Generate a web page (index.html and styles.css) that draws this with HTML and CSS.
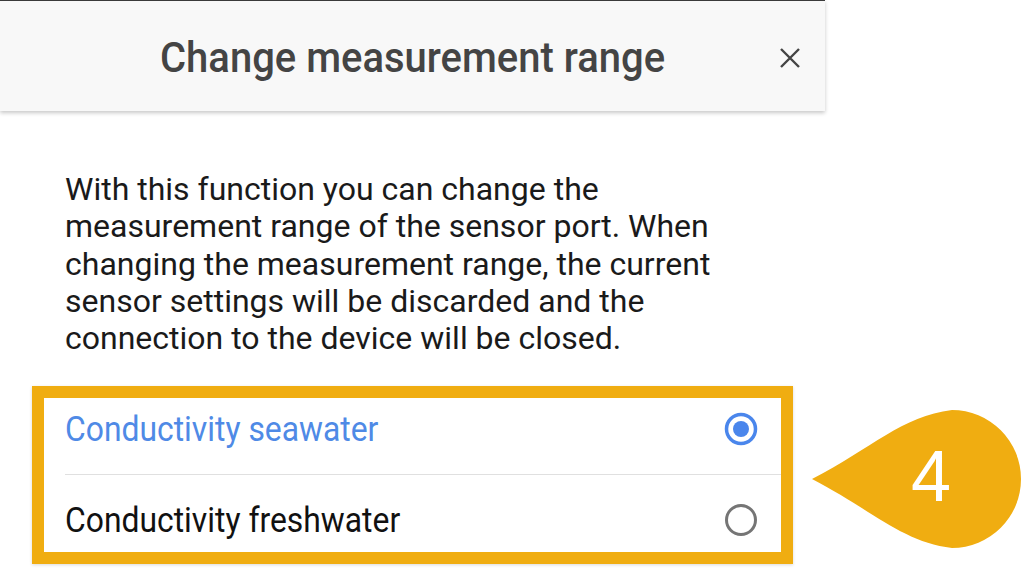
FILE: index.html
```html
<!DOCTYPE html>
<html>
<head>
<meta charset="utf-8">
<link rel="stylesheet" href="styles.css">
</head>
<body>
<div class="page">
  <div class="panel">
    <header class="header">
      <h1 class="title">Change measurement range</h1>
      <svg class="close" width="22" height="22" viewBox="0 0 22 22"><path d="M2 2 L20 20 M20 2 L2 20" stroke="#444" stroke-width="2.4" fill="none"/></svg>
    </header>
    <div class="content">
      <p class="desc">With this function you can change the measurement range of the sensor port. When changing the measurement range, the current sensor settings will be discarded and the connection to the device will be closed.</p>
      <div class="options">
        <div class="option selected">
          <span class="label">Conductivity seawater</span>
          <svg class="radio" width="34" height="34" viewBox="0 0 34 34"><circle cx="17" cy="17" r="14.5" fill="none" stroke="#4a86ec" stroke-width="3.5"/><circle cx="17" cy="17" r="8" fill="#4a86ec"/></svg>
        </div>
        <div class="divider"></div>
        <div class="option">
          <span class="label">Conductivity freshwater</span>
          <svg class="radio" width="34" height="34" viewBox="0 0 34 34"><circle cx="17" cy="17" r="14.5" fill="none" stroke="#757575" stroke-width="3"/></svg>
        </div>
      </div>
    </div>
  </div>
  <div class="callout">
    <svg width="212" height="142" viewBox="0 0 212 142"><path d="M0 71 C60 40 90 8 140 2 A69 69 0 1 1 140 140 C90 134 60 102 0 71 Z" fill="#f0ad11"/></svg>
    <span class="num">4</span>
  </div>
</div>
</body>
</html>
```
FILE: styles.css
```css
html, body {
  margin: 0;
  padding: 0;
  background: #ffffff;
}
.page {
  position: relative;
  width: 1024px;
  height: 578px;
  overflow: hidden;
  font-family: Roboto, "Noto Sans", sans-serif;
}
.panel {
  width: 825px;
}
.header {
  position: relative;
  height: 111px;
  background: #f8f8f8;
  border-top: 1px solid #3a3a3a;
  box-shadow: 0 2px 4px rgba(0,0,0,0.22);
  display: flex;
  align-items: center;
  justify-content: center;
  box-sizing: border-box;
}
.title {
  margin: 2px 0 0 0;
  font-size: 43px;
  font-weight: 500;
  color: #444;
  transform: scaleX(0.93);
  white-space: nowrap;
}
.close {
  position: absolute;
  right: 24px;
  top: 46px;
}
.content {
  padding: 60px 0 0 32px;
}
.desc {
  margin: 0 0 29px 33px;
  font-size: 32px;
  line-height: 37.3px;
  color: #1a1a1a;
  width: 700px;
}
.options {
  width: 737px;
  border: 12px solid #f0ad11;
  background: #fff;
  padding-bottom: 1px;
  box-shadow: 0 1px 3px rgba(0,0,0,0.15);
}
.option {
  height: 62px;
  display: flex;
  align-items: center;
  justify-content: space-between;
  padding: 0 23px 0 21px;
  color: #111;
}
.option.selected {
  color: #4f8ae6;
}
.option .label {
  display: inline-block;
  font-size: 35px;
  transform: scaleX(0.91);
  transform-origin: left center;
  white-space: nowrap;
}
.divider {
  height: 1px;
  background: #e0e0e0;
  margin: 14px 0 14px 21px;
}
.callout {
  position: absolute;
  left: 812px;
  top: 408px;
  width: 212px;
  height: 142px;
}
.callout svg {
  display: block;
}
.num {
  position: absolute;
  left: 99px;
  top: 28px;
  font-family: "Liberation Sans", Arial, sans-serif;
  font-size: 72px;
  line-height: 80px;
  color: #fff;
}
```
